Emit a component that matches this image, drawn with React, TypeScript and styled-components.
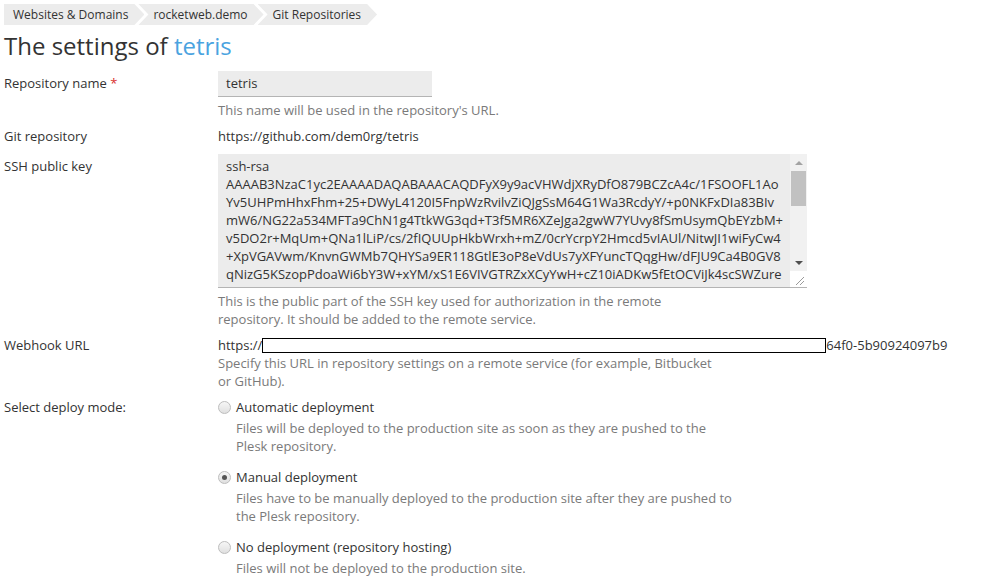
import React from "react";
import styled, { createGlobalStyle } from "styled-components";

const GlobalStyle = createGlobalStyle`
  html, body {
    margin: 0;
    padding: 0;
    background: #fff;
  }
  body {
    font-family: "Open Sans", "Liberation Sans", sans-serif;
    font-size: 13px;
    line-height: 18px;
    color: #333;
  }
`;

const crumbs = ["Websites & Domains", "rocketweb.demo", "Git Repositories"];

const keyLines = [
  "ssh-rsa",
  "AAAAB3NzaC1yc2EAAAADAQABAAACAQDFyX9y9acVHWdjXRyDfO879BCZcA4c/1FSOOFL1Ao",
  "Yv5UHPmHhxFhm+25+DWyL4120I5FnpWzRvilvZiQJgSsM64G1Wa3RcdyY/+p0NKFxDIa83BIv",
  "mW6/NG22a534MFTa9ChN1g4TtkWG3qd+T3f5MR6XZeJga2gwW7YUvy8fSmUsymQbEYzbM+",
  "v5DO2r+MqUm+QNa1lLiP/cs/2fIQUUpHkbWrxh+mZ/0crYcrpY2Hmcd5vIAUl/NitwJI1wiFyCw4",
  "+XpVGAVwm/KnvnGWMb7QHYSa9ER118GtlE3oP8eVdUs7yXFYuncTQqgHw/dFJU9Ca4B0GV8",
  "qNizG5KSzopPdoaWi6bY3W+xYM/xS1E6VIVGTRZxXCyYwH+cZ10iADKw5fEtOCViJk4scSWZure",
];

const modes = [
  {
    label: "Automatic deployment",
    hint: "Files will be deployed to the production site as soon as they are pushed to the Plesk repository.",
    checked: false,
  },
  {
    label: "Manual deployment",
    hint: "Files have to be manually deployed to the production site after they are pushed to the Plesk repository.",
    checked: true,
  },
  {
    label: "No deployment (repository hosting)",
    hint: "Files will not be deployed to the production site.",
    checked: false,
  },
];

export default () => {
  return (
    <Page>
      <GlobalStyle />
      <Breadcrumbs>
        {crumbs.map((crumb, index) => (
          <Crumb key={crumb} first={index === 0}>
            {crumb}
          </Crumb>
        ))}
      </Breadcrumbs>
      <Title>
        The settings of <TitleName>tetris</TitleName>
      </Title>

      <Form>
        <Row>
          <Label offset={3}>
            Repository name <Required>*</Required>
          </Label>
          <Field>
            <TextInput>tetris</TextInput>
            <Hint>This name will be used in the repository's URL.</Hint>
          </Field>
        </Row>

        <Row>
          <Label>Git repository</Label>
          <Field>
            <Value>https://github.com/dem0rg/tetris</Value>
          </Field>
        </Row>

        <Row>
          <Label offset={4}>SSH public key</Label>
          <Field>
            <KeyBox>
              <KeyText>
                {keyLines.map((line) => (
                  <KeyLine key={line}>{line}</KeyLine>
                ))}
              </KeyText>
              <Scrollbar>
                <ScrollArrow up />
                <ScrollThumb />
                <ScrollTrack />
                <ScrollArrow />
                <Grip>
                  <svg width="16" height="16" viewBox="0 0 16 16">
                    <path d="M6 14 L14 6 M10 14 L14 10" stroke="#9a9a9a" strokeWidth="1" fill="none" />
                  </svg>
                </Grip>
              </Scrollbar>
            </KeyBox>
            <Hint>
              This is the public part of the SSH key used for authorization in the remote repository. It should be
              added to the remote service.
            </Hint>
          </Field>
        </Row>

        <Row>
          <Label>Webhook URL</Label>
          <Field>
            <Value>
              https://
              <Redacted />
              64f0-5b90924097b9
            </Value>
            <Hint flush>Specify this URL in repository settings on a remote service (for example, Bitbucket or GitHub).</Hint>
          </Field>
        </Row>

        <Row>
          <Label>Select deploy mode:</Label>
          <Field>
            <Options>
              {modes.map((mode) => (
                <Option key={mode.label}>
                  <OptionLabel>
                    <Radio checked={mode.checked} />
                    {mode.label}
                  </OptionLabel>
                  <OptionHint>{mode.hint}</OptionHint>
                </Option>
              ))}
            </Options>
          </Field>
        </Row>
      </Form>
    </Page>
  );
};

const Page = styled.div`
  padding: 4px 0 0 4px;
`;

const Breadcrumbs = styled.div`
  display: flex;
  height: 21px;
`;

const Crumb = styled.div<{ first?: boolean }>`
  display: flex;
  align-items: center;
  height: 21px;
  background: #ececec;
  color: #333;
  font-size: 12px;
  padding: 0 16px 0 ${(p) => (p.first ? "9px" : "15px")};
  margin-left: ${(p) => (p.first ? "0" : "-6px")};
  clip-path: ${(p) =>
    p.first
      ? "polygon(0 0, calc(100% - 10px) 0, 100% 50%, calc(100% - 10px) 100%, 0 100%)"
      : "polygon(0 0, calc(100% - 10px) 0, 100% 50%, calc(100% - 10px) 100%, 0 100%, 10px 50%)"};
`;

const Title = styled.h1`
  margin: 6px 0 10px 0;
  font-size: 24px;
  line-height: 30px;
  font-weight: normal;
  color: #333;
`;

const TitleName = styled.span`
  color: #4aa3df;
`;

const Form = styled.div`
  display: flex;
  flex-direction: column;
  gap: 8px;
`;

const Row = styled.div`
  display: grid;
  grid-template-columns: 214px 1fr;
`;

const Label = styled.div<{ offset?: number }>`
  color: #333;
  padding-top: ${(p) => p.offset ?? 0}px;
`;

const Required = styled.span`
  color: #d9302c;
`;

const Field = styled.div`
  display: flex;
  flex-direction: column;
  align-items: flex-start;
`;

const TextInput = styled.div`
  box-sizing: border-box;
  width: 214px;
  height: 26px;
  padding: 3px 8px 4px;
  background: #ececec;
  border-bottom: 1px solid #b4b4b4;
  color: #333;
`;

const Value = styled.div`
  display: flex;
  align-items: center;
  color: #333;
  white-space: nowrap;
`;

const Redacted = styled.span`
  box-sizing: border-box;
  display: inline-block;
  width: 564px;
  height: 15px;
  border: 1px solid #000;
  background: #fff;
`;

const Hint = styled.div<{ flush?: boolean }>`
  margin-top: ${(p) => (p.flush ? "0" : "4px")};
  max-width: 500px;
  color: #7a7a7a;
`;

const KeyBox = styled.div`
  box-sizing: border-box;
  display: flex;
  width: 589px;
  height: 134px;
  margin-top: 1px;
  background: #ececec;
  border-bottom: 1px solid #b4b4b4;
  overflow: hidden;
`;

const KeyText = styled.div`
  flex: 1;
  padding: 3px 0 0 8px;
  overflow: hidden;
`;

const KeyLine = styled.div`
  white-space: pre;
  color: #333;
`;

const Scrollbar = styled.div`
  width: 17px;
  display: flex;
  flex-direction: column;
  background: #f1f1f1;
`;

const ScrollArrow = styled.div<{ up?: boolean }>`
  height: 17px;
  display: flex;
  align-items: center;
  justify-content: center;
  &::before {
    content: "";
    border-left: 4px solid transparent;
    border-right: 4px solid transparent;
    ${(p) => (p.up ? "border-bottom: 4px solid #a3a3a3;" : "border-top: 4px solid #505050;")}
  }
`;

const ScrollThumb = styled.div`
  height: 35px;
  margin: 0 1px;
  background: #c1c1c1;
`;

const ScrollTrack = styled.div`
  flex: 1;
`;

const Grip = styled.div`
  height: 16px;
  background: #fff;
  display: flex;
`;

const Options = styled.div`
  display: flex;
  flex-direction: column;
  gap: 13px;
`;

const Option = styled.div`
  display: flex;
  flex-direction: column;
`;

const OptionLabel = styled.div`
  display: flex;
  align-items: center;
  color: #333;
`;

const Radio = styled.span<{ checked?: boolean }>`
  box-sizing: border-box;
  position: relative;
  width: 13px;
  height: 13px;
  margin: 0 5px 0 0;
  border-radius: 50%;
  border: 1px solid #bdbdbd;
  background: linear-gradient(#f6f6f6, #e0e0e0);
  &::after {
    content: "";
    display: ${(p) => (p.checked ? "block" : "none")};
    position: absolute;
    left: 3px;
    top: 3px;
    width: 5px;
    height: 5px;
    border-radius: 50%;
    background: #555;
  }
`;

const OptionHint = styled.div`
  margin: 3px 0 0 18px;
  max-width: 500px;
  color: #7a7a7a;
`;
